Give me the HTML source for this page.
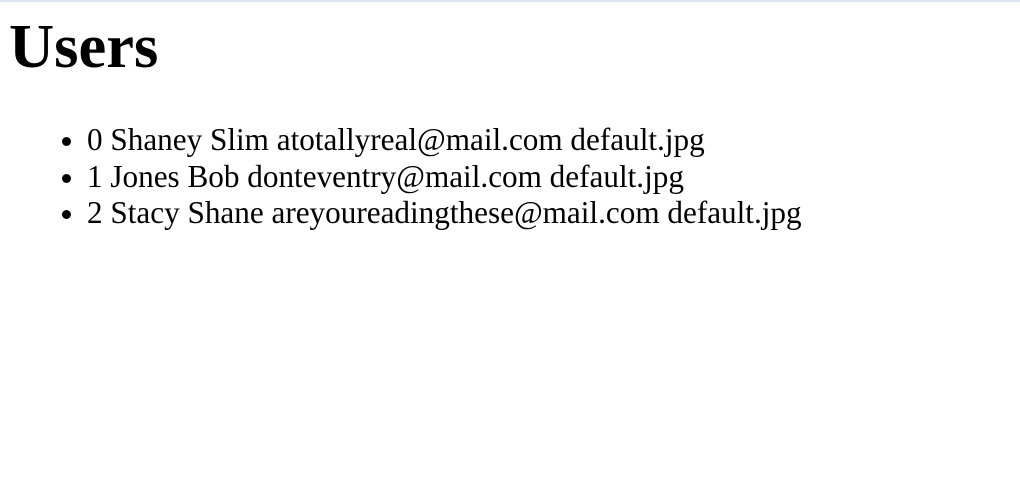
<!DOCTYPE html>
<html><head><meta charset="utf-8"><style>
html,body{margin:0;padding:0;background:#fff;width:1020px;height:497px;overflow:hidden}
body{border-top:2px solid #dde3ef;box-sizing:border-box;font-family:"Liberation Serif",serif;color:#000}
h1{font-size:62.5px;line-height:72px;margin:8px 0 0 9px;font-weight:bold}
ul{margin:40px 0 0 0;padding-left:87px;font-size:31.2px;line-height:36.5px}
</style></head><body>
<h1>Users</h1>
<ul>
<li>0 Shaney Slim atotallyreal@mail.com default.jpg</li>
<li>1 Jones Bob donteventry@mail.com default.jpg</li>
<li>2 Stacy Shane areyoureadingthese@mail.com default.jpg</li>
</ul>
</body></html>
